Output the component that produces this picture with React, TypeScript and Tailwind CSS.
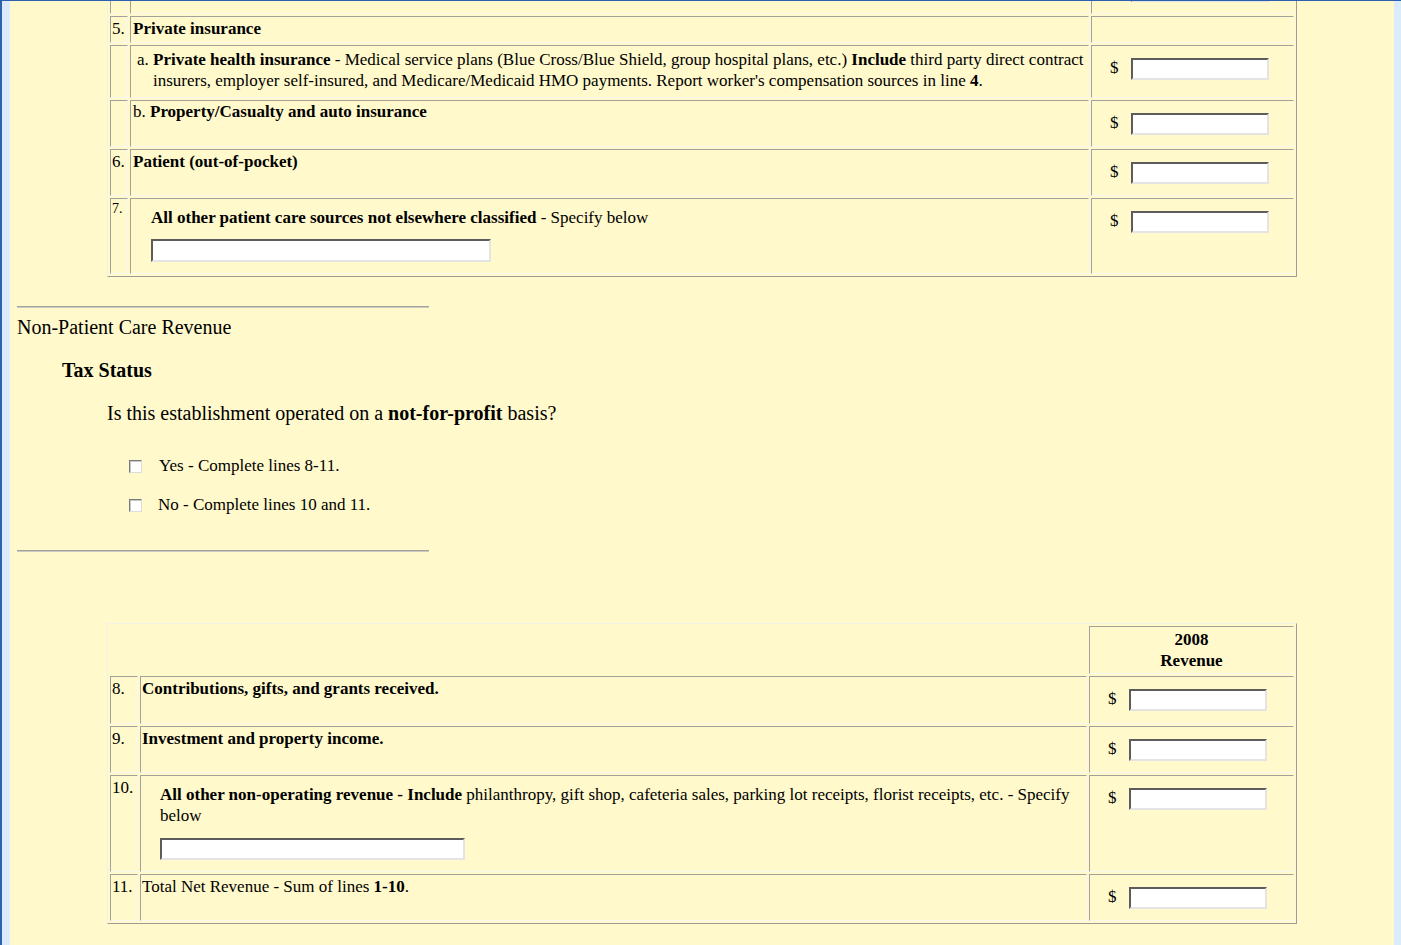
import React from 'react';

const serif = "font-['Liberation_Serif','Times_New_Roman',serif]";
const cell =
  'border border-t-[#a2a29b] border-l-[#a2a29b] border-b-[#f7f7f0] border-r-[#f7f7f0] align-top';
const outer =
  'table-fixed border-separate border-spacing-[2px] w-[1190px] mx-auto border border-t-[#f2f2ea] border-l-[#f2f2ea] border-b-[#9d9d96] border-r-[#9d9d96]';
const field =
  'block bg-white border-2 border-t-[#5c5c5c] border-l-[#5c5c5c] border-b-[#e4e4e4] border-r-[#e4e4e4] outline-none';

function Amount({ pb = 'pb-[11px]', hideSign }: { pb?: string; hideSign?: boolean }) {
  return (
    <td className={`${cell} pt-[12px] ${pb} pl-[18px]`}>
      <div className="flex items-start">
        <span className="w-[9px] leading-[20px]">{hideSign ? '' : '$'}</span>
        <input type="text" className={`${field} ml-[12px] w-[138px] h-[22px]`} />
      </div>
    </td>
  );
}

function Num({ n, small }: { n?: string; small?: boolean }) {
  return (
    <td className={`${cell} px-[1px] pt-[1px] pb-[3px] ${small ? 'text-[14px] leading-[18px]' : ''}`}>
      {n ?? '\u00a0'}
    </td>
  );
}

function Checkbox() {
  return (
    <span className="inline-block w-[13px] h-[13px] bg-white border border-t-[#7a7a7a] border-l-[#7a7a7a] border-b-[#dcdcdc] border-r-[#dcdcdc] shadow-[inset_1px_1px_0_#c8c8c8]" />
  );
}

export default function App() {
  return (
    <div className={`${serif} h-[945px] w-full flex overflow-hidden border-t border-[#2c5fae] text-black`}>
      <div className="w-[2px] bg-[#2e62b0]" />
      <div className="w-[8px] bg-[#dcebfc]" />
      <main className="flex-1 bg-[#fff9cc] px-[7px] text-[17px] leading-[21px]">
        {/* Patient care sources (continued) */}
        <table className={`${outer} mt-[-37px]`}>
          <colgroup>
            <col className="w-[18px]" />
            <col />
            <col className="w-[203px]" />
          </colgroup>
          <tbody>
            <tr>
              <Num />
              <td className={cell}>&nbsp;</td>
              <Amount hideSign />
            </tr>
            <tr>
              <Num n="5." />
              <td className={`${cell} pl-[2px] pt-[1px] pb-[3px] font-bold`}>Private insurance</td>
              <td className={cell}>&nbsp;</td>
            </tr>
            <tr>
              <Num />
              <td className={`${cell} pl-[6px] pt-[3px] pb-[6px]`}>
                <div className="flex">
                  <span className="w-[16px] shrink-0">a.</span>
                  <span>
                    <b>Private health insurance</b> - Medical service plans (Blue Cross/Blue Shield, group hospital
                    plans, etc.) <b>Include</b> third party direct contract
                    <br />
                    insurers, employer self-insured, and Medicare/Medicaid HMO payments. Report worker's compensation
                    sources in line <b>4</b>.
                  </span>
                </div>
              </td>
              <Amount />
            </tr>
            <tr>
              <Num />
              <td className={`${cell} pl-[2px] pt-[0px] pb-[3px]`}>
                b. <b>Property/Casualty and auto insurance</b>
              </td>
              <Amount />
            </tr>
            <tr>
              <Num n="6." />
              <td className={`${cell} pl-[2px] pt-[1px] pb-[3px] font-bold`}>Patient (out-of-pocket)</td>
              <Amount />
            </tr>
            <tr>
              <Num n="7." small />
              <td className={`${cell} pt-[2px] pb-[2px]`}>
                <div className="pl-[20px] pt-[6px] pb-[9px]">
                  <div>
                    <b>All other patient care sources not elsewhere classified</b> - Specify below
                  </div>
                  <input type="text" className={`${field} mt-[11px] w-[340px] h-[23px]`} />
                </div>
              </td>
              <Amount />
            </tr>
          </tbody>
        </table>

        <hr className="mt-[29px] w-[412px] h-[2px] border-0 border-t border-b border-t-[#a3a39c] border-b-[#c9c9c0]" />

        <div className="mt-[8px] text-[20px] leading-[23px]">Non-Patient Care Revenue</div>
        <div className="mt-[20px] ml-[45px] text-[20px] leading-[23px] font-bold">Tax Status</div>
        <div className="mt-[20px] ml-[90px] text-[20px] leading-[23px]">
          Is this establishment operated on a <b>not-for-profit</b> basis?
        </div>

        <div className="ml-[112px] mt-[31px] flex flex-col gap-[19px] leading-[20px]">
          <label className="flex items-center">
            <Checkbox />
            <span className="ml-[17px]">Yes - Complete lines 8-11.</span>
          </label>
          <label className="flex items-center">
            <Checkbox />
            <span className="ml-[16px]">No - Complete lines 10 and 11.</span>
          </label>
        </div>

        <hr className="mt-[35px] w-[412px] h-[2px] border-0 border-t border-b border-t-[#a3a39c] border-b-[#c9c9c0]" />

        {/* Non-patient care revenue */}
        <table className={`${outer} mt-[71px]`}>
          <colgroup>
            <col className="w-[28px]" />
            <col />
            <col className="w-[205px]" />
          </colgroup>
          <tbody>
            <tr>
              <td colSpan={2} />
              <td className={`${cell} py-[2px] text-center font-bold`}>
                2008
                <br />
                Revenue
              </td>
            </tr>
            <tr>
              <Num n="8." />
              <td className={`${cell} pl-[1px] pt-[1px] pb-[3px] font-bold`}>Contributions, gifts, and grants received.</td>
              <Amount pb="pb-[12px]" />
            </tr>
            <tr>
              <Num n="9." />
              <td className={`${cell} pl-[1px] pt-[1px] pb-[3px] font-bold`}>Investment and property income.</td>
              <Amount />
            </tr>
            <tr>
              <Num n="10." />
              <td className={`${cell} pt-[2px] pb-[2px]`}>
                <div className="pl-[19px] pt-[6px] pb-[9px]">
                  <div>
                    <b>All other non-operating revenue - Include</b> philanthropy, gift shop, cafeteria sales, parking
                    lot receipts, florist receipts, etc. - Specify
                    <br />
                    below
                  </div>
                  <input type="text" className={`${field} mt-[12px] w-[305px] h-[22px]`} />
                </div>
              </td>
              <Amount />
            </tr>
            <tr>
              <Num n="11." />
              <td className={`${cell} pl-[1px] pt-[1px] pb-[3px]`}>
                Total Net Revenue - Sum of lines <b>1-10</b>.
              </td>
              <Amount />
            </tr>
          </tbody>
        </table>
      </main>
      <div className="w-[7px] bg-[#dcebfc]" />
    </div>
  );
}
